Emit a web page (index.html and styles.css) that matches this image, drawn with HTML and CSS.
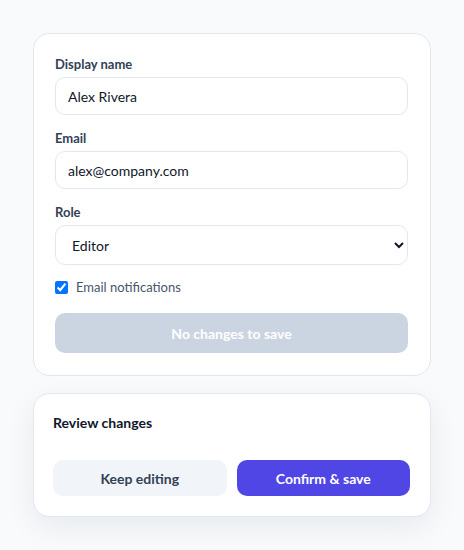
FILE: index.html
```html
<!DOCTYPE html>
<html>
<head>
<meta charset="utf-8">
<link rel="stylesheet" href="styles.css">
</head>
<body>
<div class="page">
  <form class="card form-card">
    <div class="field">
      <label class="label" for="name">Display name</label>
      <input class="input" id="name" type="text" value="Alex Rivera">
    </div>
    <div class="field">
      <label class="label" for="email">Email</label>
      <input class="input" id="email" type="text" value="alex@company.com">
    </div>
    <div class="field">
      <label class="label" for="role">Role</label>
      <select class="input select" id="role">
        <option>Editor</option>
        <option>Viewer</option>
        <option>Admin</option>
      </select>
    </div>
    <label class="check-row"><input type="checkbox" checked class="check"> <span>Email notifications</span></label>
    <button type="button" class="btn btn-disabled" disabled>No changes to save</button>
  </form>
  <div class="card review-card">
    <div class="review-title">Review changes</div>
    <div class="actions">
      <button type="button" class="btn btn-secondary">Keep editing</button>
      <button type="button" class="btn btn-primary">Confirm &amp; save</button>
    </div>
  </div>
</div>
</body>
</html>
```
FILE: styles.css
```css
html, body {
  margin: 0;
  padding: 0;
  background: #f8fafc;
  font-family: Lato, "Noto Sans", sans-serif;
}
.page {
  padding: 33px;
  display: flex;
  flex-direction: column;
  gap: 17px;
}
.card {
  background: #ffffff;
  border: 1px solid #e2e8f0;
  border-radius: 16px;
}
.form-card {
  margin: 0;
  padding: 22px 22px 22px 21px;
  display: flex;
  flex-direction: column;
}
.field {
  display: flex;
  flex-direction: column;
  gap: 5px;
  margin-bottom: 15px;
}
.label {
  font-size: 13px;
  line-height: 16px;
  font-weight: 700;
  color: #334155;
}
.input {
  box-sizing: border-box;
  height: 38px;
  border: 1px solid #e2e8f0;
  border-radius: 10px;
  padding: 0 12px;
  font-family: inherit;
  font-size: 14px;
  color: #0f172a;
  background: #ffffff;
  outline: none;
  width: 100%;
}
.select {
  height: 40px;
  padding: 0 8px 0 12px;
}
.check-row {
  display: flex;
  align-items: center;
  gap: 8px;
  font-size: 13px;
  line-height: 18px;
  color: #475569;
  margin-top: -2px;
}
.check {
  margin: 0;
  width: 13px;
  height: 13px;
}
.btn {
  border: none;
  border-radius: 10px;
  font-family: inherit;
  font-size: 14px;
  font-weight: 700;
  cursor: pointer;
}
.btn-disabled {
  margin-top: 17px;
  height: 40px;
  background: #cbd5e1;
  color: #ffffff;
  cursor: default;
}
.review-card {
  padding: 20px 20px 20px 19px;
  box-shadow: 0 10px 30px rgba(15, 23, 42, 0.07);
}
.review-title {
  font-size: 14px;
  line-height: 18px;
  font-weight: 700;
  color: #0f172a;
  margin-bottom: 28px;
}
.actions {
  display: flex;
  gap: 10px;
}
.actions .btn {
  flex: 1;
  height: 36px;
}
.btn-secondary {
  background: #f1f5f9;
  color: #334155;
}
.btn-primary {
  background: #4f46e5;
  color: #ffffff;
}
```
